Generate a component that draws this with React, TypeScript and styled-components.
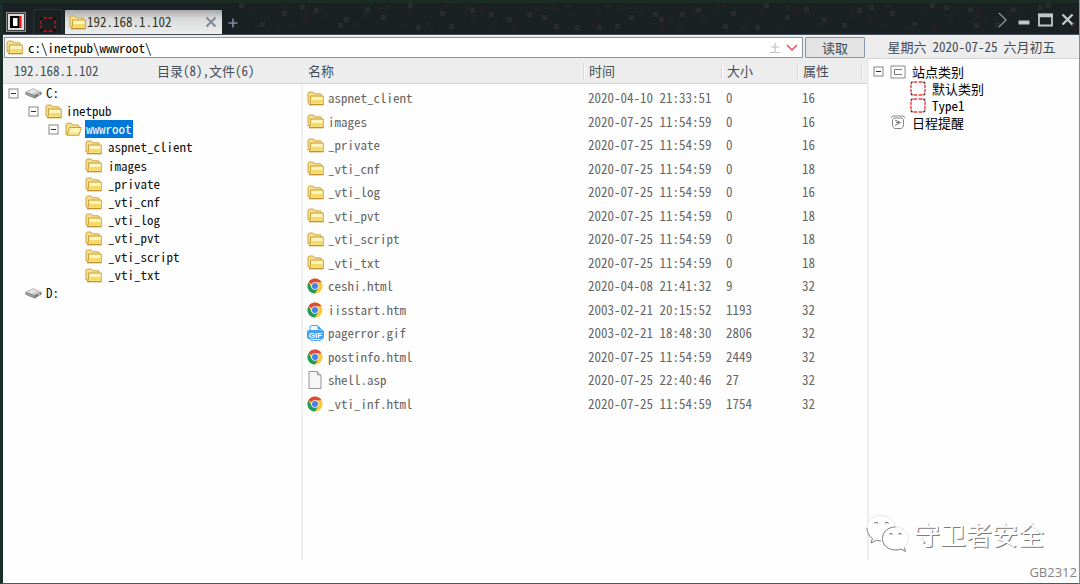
import React, { useState } from "react";
import styled, { createGlobalStyle, css } from "styled-components";

const sans = `"Noto Sans CJK SC", "Liberation Sans", sans-serif`;

const GlobalStyle = createGlobalStyle`
  *, *::before, *::after { box-sizing: border-box; }
  body {
    margin: 0;
    background: #fdfdfd;
    color: #222;
    font: 13px/16px ${sans};
    font-feature-settings: "hwid";
  }
  button, input {
    margin: 0;
    padding: 0;
    border: 0;
    background: none;
    color: inherit;
    font: inherit;
    font-feature-settings: inherit;
  }
  ul { list-style: none; margin: 0; padding: 0; }
  svg { display: block; flex: none; }
`;

/* ---------- window ---------- */

const Window = styled.div`
  display: flex;
  flex-direction: column;
  min-height: 100vh;
  border-left: 3px solid #1a2d26;
  border-right: 1px solid #8b908e;
  border-bottom: 1px solid #4f5b57;
  background: #fefefe;
`;

const TitleBar = styled.header`
  position: relative;
  display: flex;
  align-items: flex-end;
  height: 35px;
  background: #1a2123;
  border-top: 3px solid #1b2c25;
  border-bottom: 1px solid #46505c;
`;

const Specks = styled.svg`
  position: absolute;
  inset: 0;
  width: 100%;
  height: 100%;
`;

const TabStrip = styled.nav`
  position: relative;
  display: flex;
  align-items: flex-end;
  flex: 1;
`;

const LogoButton = styled.button`
  align-self: center;
  width: 20px;
  height: 20px;
  margin: 0 7px 0 3px;
`;

const HomeTab = styled.button`
  display: flex;
  align-items: flex-end;
  justify-content: center;
  width: 30px;
  height: 25px;
  margin-right: 2px;
  padding-bottom: 2px;
  border: 1px solid #2a3335;
  border-bottom: 0;
  border-radius: 3px 3px 0 0;
`;

const Tab = styled.div`
  display: flex;
  align-items: center;
  gap: 4px;
  width: 157px;
  height: 24px;
  padding: 0 5px 0 4px;
  border-radius: 1px 1px 0 0;
  background: linear-gradient(#a6a7a8, #d8d9d9 35%, #ededed);
  color: #33331c;
`;

const TabLabel = styled.button`
  display: flex;
  align-items: center;
  flex: 1;
`;

const IconButton = styled.button`
  display: flex;
  align-items: center;
  justify-content: center;
`;

const NewTab = styled(IconButton)`
  width: 22px;
  height: 22px;
`;

const WindowControls = styled.div`
  position: relative;
  display: flex;
  align-items: center;
  align-self: center;
  gap: 8px;
  padding: 2px 5px 0 0;
`;

/* ---------- main areas ---------- */

const Body = styled.div`
  display: flex;
  flex: 1;
`;

const Browser = styled.main`
  display: flex;
  flex-direction: column;
  flex: 1;
  min-width: 0;
`;

const AddressBar = styled.form`
  display: flex;
  gap: 2px;
  height: 24px;
  padding: 2px 2px 1px 1px;
  background: #ededed;
`;

const AddressField = styled.label`
  display: flex;
  align-items: center;
  flex: 1;
  gap: 5px;
  padding: 0 4px 0 1px;
  border: 1px solid #8a95a0;
  background: #fff;
`;

const AddressInput = styled.input`
  flex: 1;
  min-width: 0;
  color: #000;
  outline: none;
`;

const ReadButton = styled.button`
  width: 60px;
  border: 1px solid #8794a3;
  border-radius: 1px;
  background: #e3e3e3;
  color: #3b4652;
`;

const Panels = styled.div`
  display: flex;
  flex: 1;
`;

const TreePanel = styled.section`
  flex: 0 0 300px;
  display: flex;
  flex-direction: column;
`;

const headerBar = css`
  height: 25px;
  background: #ededed;
  border-bottom: 1px solid #d6d6d6;
  color: #434e59;
`;

const TreeHeader = styled.div`
  ${headerBar}
  display: flex;
  align-items: center;
  padding-left: 11px;
`;

const HostName = styled.span`
  width: 143px;
`;

const TreeList = styled.ul`
  flex: 1;
  border-right: 2px solid #f1f1f1;
`;

const TreeRow = styled.li<{ $depth: number }>`
  display: flex;
  align-items: center;
  height: 18px;
  padding-left: ${(p) => 5 + p.$depth * 20}px;
  color: #111;
  &:nth-child(5n) { height: 19px; }
`;

const Expander = styled.button`
  width: 11px;
  height: 11px;
  flex: none;
`;

const ExpanderSpace = styled.span`
  width: 11px;
  flex: none;
`;

const TreeIcon = styled.span`
  width: 17px;
  margin: 0 3px 0 6px;
  flex: none;
`;

const TreeName = styled.span<{ $selected?: boolean }>`
  padding: 0 1px;
  line-height: 18px;
  ${(p) => p.$selected && css`background: #0078d7; color: #fff;`}
`;

const LeafName = styled(TreeName)`
  padding-left: 3px;
`;

/* ---------- file table ---------- */

const ListPanel = styled.section`
  flex: 1;
  min-width: 0;
`;

const FileTable = styled.table`
  width: 100%;
  border-collapse: separate;
  border-spacing: 0;
  table-layout: fixed;
  color: #666;
`;

const HeadCell = styled.th<{ $width?: number; $divider?: boolean }>`
  ${headerBar}
  width: ${(p) => (p.$width ? `${p.$width}px` : "auto")};
  padding: 0 0 0 ${(p) => (p.$divider ? 6 : 5)}px;
  text-align: left;
  font-weight: 400;
  background: ${(p) =>
    p.$divider
      ? "linear-gradient(#dadada, #dadada) 0 4px / 1px 17px no-repeat, linear-gradient(#f8f8f8, #f8f8f8) 1px 4px / 1px 17px no-repeat, #ededed"
      : "#ededed"};
`;

const FileRow = styled.tr`
  height: 24px;
  &:nth-child(even) { height: 23px; }
`;

const Cell = styled.td`
  padding: 4px 0 0 5px;
  &:first-child { padding-left: 4px; }
`;

const FileName = styled.span`
  display: flex;
  align-items: center;
  gap: 4px;
  height: 16px;
`;

const FileIcon = styled.span`
  width: 17px;
  flex: none;
`;

/* ---------- side panel ---------- */

const Side = styled.aside`
  display: flex;
  flex-direction: column;
  flex: 0 0 212px;
`;

const DateBar = styled.div`
  display: flex;
  align-items: center;
  justify-content: center;
  gap: 6px;
  height: 24px;
  padding-right: 3px;
  background: #ededed;
  border-bottom: 1px solid #d6d6d6;
  color: #3f4a55;
`;

const SideTree = styled.ul`
  flex: 1;
  padding: 4px 0 0 4px;
  border-left: 2px solid #ededed;
`;

const SideRow = styled.li<{ $nested?: boolean }>`
  display: flex;
  align-items: center;
  gap: 6px;
  height: 17px;
  padding-left: ${(p) => (p.$nested ? 37 : 0)}px;
  color: #000;
`;

const StatusBar = styled.footer`
  display: flex;
  align-items: center;
  justify-content: flex-end;
  height: 23px;
  padding-right: 2px;
  color: #858585;
  font: 13px/18px "Open Sans", sans-serif;
`;

const Watermark = styled.div`
  position: absolute;
  right: 36px;
  bottom: 30px;
  display: flex;
  align-items: center;
  gap: 5px;
  color: #fff;
  font-size: 26px;
  line-height: 38px;
  text-shadow: 1px 1px 0 #7c7c7c;
`;

/* ---------- drawings ---------- */

const Folder = () => (
  <svg width="17" height="15" viewBox="0 0 17 15">
    <path d="M1 12V3Q1 1 2.500 1H6L8 2.800H13Q14.500 2.800 14.500 4.500V12Z" fill="#f5df8e" stroke="#d0a545" />
    <path d="M3.500 5H16.300V13.500H2.500Q3.500 12 3.500 10Z" fill="#fbe88f" stroke="#c59a38" strokeWidth="0.900" />
    <path d="M4.500 6H15.500V9H4.500Z" fill="#fff6bd" />
    <path d="M4.500 9H15.500V12.500H4.500Z" fill="#f7d969" />
    <path d="M2 13.800H16.500" stroke="#b98a2a" />
  </svg>
);

const OpenFolder = () => (
  <svg width="17" height="15" viewBox="0 0 17 15">
    <path d="M1 12.500V3Q1 1.200 3 1.200H6L8 3H13Q14 3 14 5V12Z" fill="#f5df8e" stroke="#d0a545" />
    <path d="M2 13.300L4.500 5.500H16.300L14 13.300Z" fill="#fbe88f" stroke="#c59a38" strokeWidth="0.900" />
    <path d="M5 6.200H15.300L14.200 10H4Z" fill="#fff6bd" />
  </svg>
);

const Drive = () => (
  <svg width="17" height="11" viewBox="0 0 17 11">
    <path d="M0.500 4L8 0.500L16.500 4V6.500L9.500 10.500L0.500 6.500Z" fill="#777" />
    <path d="M0.500 4L8 0.500L16.500 4L9.500 7.300Z" fill="#c9c9c9" />
    <path d="M3 3.800L8 1.600L12 3.200L7 5.600Z" fill="#e6e6e6" />
    <path d="M0.500 4.300L9.500 7.500V10.300L0.500 6.600Z" fill="#999" />
    <path d="M13 7.200L15 6.200" stroke="#e9e9e9" />
  </svg>
);

const Chrome = () => (
  <svg width="17" height="16" viewBox="0 0 17 16">
    <circle cx="8" cy="8" r="7.500" fill="#fbc934" />
    <path d="M8 8L1.500 4.250A7.500 7.500 0 0 1 14.500 4.250H8Z" fill="#dc4a3d" />
    <path d="M1.500 4.250A7.500 7.500 0 0 0 8 15.500L11.200 9.900L8 8L4.800 9.800Z" fill="#1f9d58" />
    <circle cx="8" cy="8" r="3.800" fill="#f4f4f4" />
    <circle cx="8" cy="8" r="3" fill="#4680ea" />
  </svg>
);

const Gif = () => (
  <svg width="17" height="16" viewBox="0 0 17 16">
    <path d="M3 6V2Q3 0.600 4.400 0.600H10.500L14.500 4.500V14Q14.500 15.400 13 15.400H4.400Q3 15.400 3 14Z" fill="#f5faff" stroke="#45a3ea" />
    <path d="M10.500 0.600V4.500H14.500Z" fill="#45a3ea" />
    <rect x="0" y="5" width="17" height="9" rx="2" fill="#45a3ea" />
    <text x="8.500" y="12.500" textAnchor="middle" fontFamily="Liberation Sans, sans-serif" fontWeight="700" fontSize="8" fill="#fff">GIF</text>
  </svg>
);

const Blank = () => (
  <svg width="17" height="18" viewBox="0 0 17 18">
    <path d="M2 0.500H10.500L14 4V17.500H2Z" fill="#f6f6f6" stroke="#979797" />
    <path d="M10.500 0.500V4H14" fill="#ddd" stroke="#979797" />
  </svg>
);

const MinusBox = () => (
  <svg width="11" height="11" viewBox="0 0 11 11">
    <rect x="1" y="1" width="9" height="9" fill="#fff" stroke="#858585" />
    <path d="M3 5.500H8" stroke="#333" />
  </svg>
);

const RedFrame = ({ dark }: { dark?: boolean }) => (
  <svg width="16" height="15" viewBox="0 0 16 15">
    <path d="M3.500 1H7M8.500 1H12.500M3.500 14H7M8.500 14H12.500M1 3.500V7M1 8V11.500M15 3.500V7M15 8V11.500" stroke={dark ? "#c51218" : "#f53a3a"} strokeWidth="1.400" />
    <path d="M0.800 2.500L2.500 0.800M13.500 0.800L15.200 2.500M0.800 12.500L2.500 14.200M13.500 14.200L15.200 12.500" stroke={dark ? "#050505" : "#333"} strokeWidth="1.500" />
  </svg>
);

const Logo = () => (
  <svg width="20" height="20" viewBox="0 0 20 20">
    <rect x="0.500" y="0.500" width="19" height="19" fill="#3a3a3a" stroke="#8d8d8d" />
    <rect x="2" y="2" width="16" height="16" fill="#dcdcdc" />
    <rect x="4" y="4" width="10" height="12" fill="#000" />
    <rect x="7" y="6" width="4.500" height="8" fill="#fff" />
    <rect x="13" y="4" width="2.500" height="12" fill="#f01414" />
  </svg>
);

const CategoryIcon = () => (
  <svg width="16" height="14" viewBox="0 0 16 14">
    <rect x="1" y="1" width="14" height="12" fill="#fff" stroke="#8b8b8b" />
    <path d="M12 4.500H4.500V9.500H12" fill="none" stroke="#777" />
  </svg>
);

const ReminderIcon = () => (
  <svg width="16" height="15" viewBox="0 0 16 15">
    <path d="M1 3Q1.500 1 4 1H12Q14.500 1 15 3" fill="none" stroke="#888" />
    <path d="M4 3H12L13.500 4.500V11L11.500 13.500H4.500L2.500 11V4.500Z" fill="#fff" stroke="#888" />
    <path d="M5 5L10.500 7.500L5 10.500M6 7.500H9" fill="none" stroke="#777" />
  </svg>
);

const WeChat = () => (
  <svg width="43" height="40" viewBox="0 0 43 40">
    <g fill="#fff" stroke="#e2e2e2" strokeWidth="0.800">
      <path d="M15 1.500C7 1.500 1 6.500 1 14C1 18.500 3 22 6.500 24.500L5 29L10.500 26.300C13 27 15 27.200 17 27C25 26.500 30 21 30 14C30 6.500 23 1.500 15 1.500Z" />
      <path d="M29.500 13C22 13 16.500 18 16.500 24.500C16.500 31 22 36 29.500 36C31.500 36 33.500 35.700 35 35L39.500 37.500L38.500 33.500C41 31.500 42.500 28 42.500 24.500C42.500 18 37 13 29.500 13Z" />
    </g>
    <path d="M1 14C1 18.500 3 22 6.500 24.500L5 29L10.500 26.300L15 27M29.500 13C22 13 16.500 18 16.500 24.500C16.500 31 22 36 29.500 36C31.500 36 33.500 35.700 35 35L39.500 37.500L38.500 33.500" fill="none" stroke="#858585" />
    <path d="M8.500 9.500Q10 7 12 9.500M19 9.500Q21 7 22.500 9.500M23.500 20.500Q25 18.500 26.500 20.500M32.500 20.500Q34 18.500 35.500 20.500" fill="none" stroke="#777" strokeWidth="1.200" />
  </svg>
);

const speckShades = ["#2a2b2b", "#222423", "#313131", "#1e2324", "#261f1f"];
const specks = Array.from({ length: 300 }, (_, i) => ({
  x: 236 + i * 7 + ((i * i * 5) % 9),
  y: (i * i * 3 + i * 5) % 23,
  fill: speckShades[(i * i + i * 2) % 5],
}));

/* ---------- data ---------- */

type TreeNode = { name: string; depth: number; icon: "drive" | "open" | "folder"; open?: boolean };

const tree: TreeNode[] = [
  { name: "C:", depth: 0, icon: "drive", open: true },
  { name: "inetpub", depth: 1, icon: "folder", open: true },
  { name: "wwwroot", depth: 2, icon: "open", open: true },
  ...["aspnet_client", "images", "_private", "_vti_cnf", "_vti_log", "_vti_pvt", "_vti_script", "_vti_txt"].map(
    (name): TreeNode => ({ name, depth: 3, icon: "folder" })
  ),
  { name: "D:", depth: 0, icon: "drive" },
];

const treeIcons = { drive: Drive, open: OpenFolder, folder: Folder };
const fileIcons = { folder: Folder, chrome: Chrome, gif: Gif, blank: Blank };

const files: [keyof typeof fileIcons, string, string, number, number][] = [
  ["folder", "aspnet_client", "2020-04-10 21:33:51", 0, 16],
  ["folder", "images", "2020-07-25 11:54:59", 0, 16],
  ["folder", "_private", "2020-07-25 11:54:59", 0, 16],
  ["folder", "_vti_cnf", "2020-07-25 11:54:59", 0, 18],
  ["folder", "_vti_log", "2020-07-25 11:54:59", 0, 16],
  ["folder", "_vti_pvt", "2020-07-25 11:54:59", 0, 18],
  ["folder", "_vti_script", "2020-07-25 11:54:59", 0, 18],
  ["folder", "_vti_txt", "2020-07-25 11:54:59", 0, 18],
  ["chrome", "ceshi.html", "2020-04-08 21:41:32", 9, 32],
  ["chrome", "iisstart.htm", "2003-02-21 20:15:52", 1193, 32],
  ["gif", "pagerror.gif", "2003-02-21 18:48:30", 2806, 32],
  ["chrome", "postinfo.html", "2020-07-25 11:54:59", 2449, 32],
  ["blank", "shell.asp", "2020-07-25 22:40:46", 27, 32],
  ["chrome", "_vti_inf.html", "2020-07-25 11:54:59", 1754, 32],
];

export default function App() {
  const [path, setPath] = useState("c:\\inetpub\\wwwroot\\");
  const [selected, setSelected] = useState("wwwroot");

  return (
    <Window>
      <GlobalStyle />
      <TitleBar>
        <Specks aria-hidden="true">
          {specks.map((s, i) => (
            <rect key={i} x={s.x} y={s.y} width="5" height="5" fill={s.fill} />
          ))}
        </Specks>
        <TabStrip>
          <LogoButton aria-label="Menu"><Logo /></LogoButton>
          <HomeTab aria-label="Home"><RedFrame dark /></HomeTab>
          <Tab>
            <TabLabel><Folder /><TreeName>192.168.1.102</TreeName></TabLabel>
            <IconButton aria-label="Close tab">
              <svg width="12" height="12" viewBox="0 0 12 12"><path d="M1.500 1.500L10.500 10.500M10.500 1.500L1.500 10.500" stroke="#7d8a98" strokeWidth="2" /></svg>
            </IconButton>
          </Tab>
          <NewTab aria-label="New tab">
            <svg width="10" height="10" viewBox="0 0 10 10"><path d="M5 0.500V9.500M0.500 5H9.500" stroke="#7e8b98" strokeWidth="1.600" /></svg>
          </NewTab>
        </TabStrip>
        <WindowControls>
          <IconButton aria-label="More">
            <svg width="14" height="16" viewBox="0 0 14 16"><path d="M3 1L10 8L3 15" fill="none" stroke="#8d979b" strokeWidth="1.300" /></svg>
          </IconButton>
          <IconButton aria-label="Minimize">
            <svg width="12" height="14" viewBox="0 0 12 14"><path d="M0.500 9.500H11.500" stroke="#c3c6c8" strokeWidth="4" /></svg>
          </IconButton>
          <IconButton aria-label="Maximize">
            <svg width="15" height="14" viewBox="0 0 15 14"><path d="M1 1.500H14V12.500H1Z" fill="none" stroke="#c3c6c8" strokeWidth="1.800" /><path d="M0 2.500H15" stroke="#c3c6c8" strokeWidth="3.500" /></svg>
          </IconButton>
          <IconButton aria-label="Close">
            <svg width="13" height="13" viewBox="0 0 13 13"><path d="M1.500 1.500L11.500 11.500M11.500 1.500L1.500 11.500" stroke="#c3c6c8" strokeWidth="2.400" /></svg>
          </IconButton>
        </WindowControls>
      </TitleBar>

      <Body>
        <Browser>
          <AddressBar onSubmit={(e) => e.preventDefault()}>
            <AddressField>
              <Folder />
              <AddressInput aria-label="Path" value={path} onChange={(e) => setPath(e.target.value)} />
              <IconButton type="button" aria-label="Up">
                <svg width="12" height="12" viewBox="0 0 12 12"><path d="M6 1V10M2 5H10.500M1 10.500H11" stroke="#c0c0c0" strokeWidth="1.200" /></svg>
              </IconButton>
              <IconButton type="button" aria-label="History">
                <svg width="12" height="8" viewBox="0 0 12 8"><path d="M1 1L6 6L11 1" fill="none" stroke="#f0474b" strokeWidth="1.500" /></svg>
              </IconButton>
            </AddressField>
            <ReadButton>读取</ReadButton>
          </AddressBar>

          <Panels>
            <TreePanel>
              <TreeHeader>
                <HostName>192.168.1.102</HostName>
                <span>目录(8),文件(6)</span>
              </TreeHeader>
              <TreeList>
                {tree.map((node) => {
                  const Icon = treeIcons[node.icon];
                  const Name = node.icon === "folder" && !node.open ? LeafName : TreeName;
                  return (
                    <TreeRow key={node.name} $depth={node.depth} onClick={() => setSelected(node.name)}>
                      {node.open ? <Expander aria-label={`Collapse ${node.name}`}><MinusBox /></Expander> : <ExpanderSpace />}
                      <TreeIcon><Icon /></TreeIcon>
                      <Name $selected={selected === node.name}>{node.name}</Name>
                    </TreeRow>
                  );
                })}
              </TreeList>
            </TreePanel>

            <ListPanel>
              <FileTable>
                <thead>
                  <tr>
                    <HeadCell>名称</HeadCell>
                    <HeadCell $width={138} $divider>时间</HeadCell>
                    <HeadCell $width={76} $divider>大小</HeadCell>
                    <HeadCell $width={64} $divider>属性</HeadCell>
                    <HeadCell $width={5} $divider aria-hidden="true" />
                  </tr>
                </thead>
                <tbody>
                  {files.map(([icon, name, time, size, attr]) => {
                    const Icon = fileIcons[icon];
                    return (
                      <FileRow key={name}>
                        <Cell><FileName><FileIcon><Icon /></FileIcon>{name}</FileName></Cell>
                        <Cell>{time}</Cell>
                        <Cell>{size}</Cell>
                        <Cell>{attr}</Cell>
                        <td />
                      </FileRow>
                    );
                  })}
                </tbody>
              </FileTable>
            </ListPanel>
          </Panels>
        </Browser>

        <Side>
          <DateBar><span>星期六</span><span>2020-07-25</span><span>六月初五</span></DateBar>
          <SideTree>
            <SideRow><Expander aria-label="Collapse"><MinusBox /></Expander><CategoryIcon /><span>站点类别</span></SideRow>
            <SideRow $nested><RedFrame /><span>默认类别</span></SideRow>
            <SideRow $nested><RedFrame /><span>Type1</span></SideRow>
            <SideRow><ExpanderSpace /><ReminderIcon /><span>日程提醒</span></SideRow>
          </SideTree>
        </Side>
      </Body>

      <StatusBar>GB2312</StatusBar>
      <Watermark><WeChat />守卫者安全</Watermark>
    </Window>
  );
}
